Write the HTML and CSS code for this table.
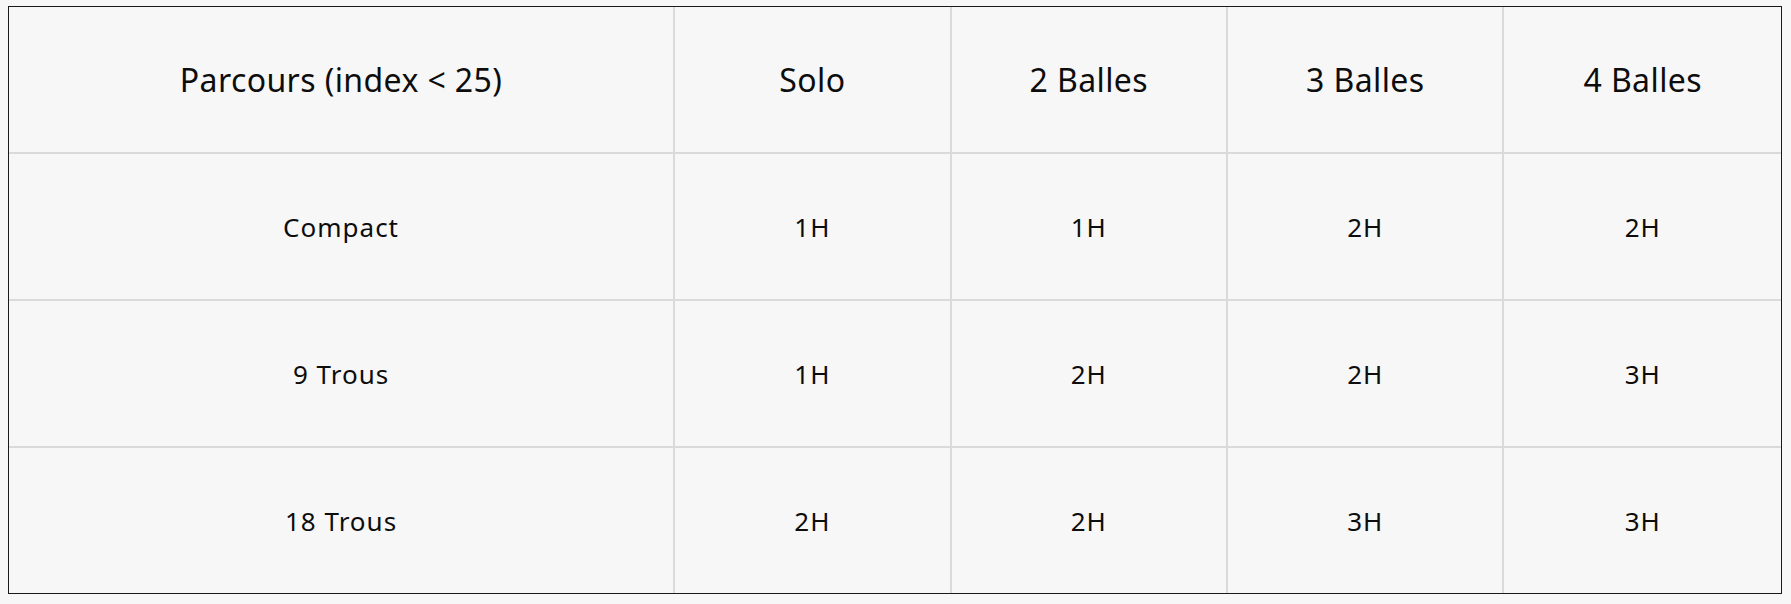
FILE: index.html
```html
<!DOCTYPE html>
<html lang="fr">
<head>
<meta charset="utf-8">
<title>Tarifs</title>
<link rel="stylesheet" href="styles.css">
</head>
<body>
<div class="wrap">
<table class="grid">
  <colgroup>
    <col class="c-first">
    <col class="c-other">
    <col class="c-other">
    <col class="c-other">
    <col class="c-other">
  </colgroup>
  <thead>
    <tr>
      <th>Parcours (index &lt; 25)</th>
      <th>Solo</th>
      <th>2 Balles</th>
      <th>3 Balles</th>
      <th>4 Balles</th>
    </tr>
  </thead>
  <tbody>
    <tr><td>Compact</td><td>1H</td><td>1H</td><td>2H</td><td>2H</td></tr>
    <tr><td>9 Trous</td><td>1H</td><td>2H</td><td>2H</td><td>3H</td></tr>
    <tr><td>18 Trous</td><td>2H</td><td>2H</td><td>3H</td><td>3H</td></tr>
  </tbody>
</table>
</div>
</body>
</html>
```
FILE: styles.css
```css
html, body {
  margin: 0;
  background: #f7f7f7;
}
.wrap {
  padding: 6px 9px 9px 8px;
}
.grid {
  width: 1774px;
  border-collapse: separate;
  border-spacing: 0;
  table-layout: fixed;
  border: 1px solid #1a1a1a;
  background: #f7f7f7;
  font-family: "Noto Sans", "Open Sans", sans-serif;
  color: #0d0d0d;
}
.c-first { width: 665px; }
.c-other { width: 276px; }
.grid th, .grid td {
  text-align: center;
  vertical-align: middle;
  padding: 0;
  border-right: 2px solid #dadada;
  border-bottom: 2px solid #dadada;
}
.grid th:last-child, .grid td:last-child { border-right: none; }
.grid tbody tr:last-child td { border-bottom: none; }
.grid th {
  height: 145px;
  font-size: 32px;
  font-weight: 400;
  letter-spacing: 0.4px;
}
.grid td {
  height: 145px;
  font-size: 26px;
  letter-spacing: 1px;
}
```
